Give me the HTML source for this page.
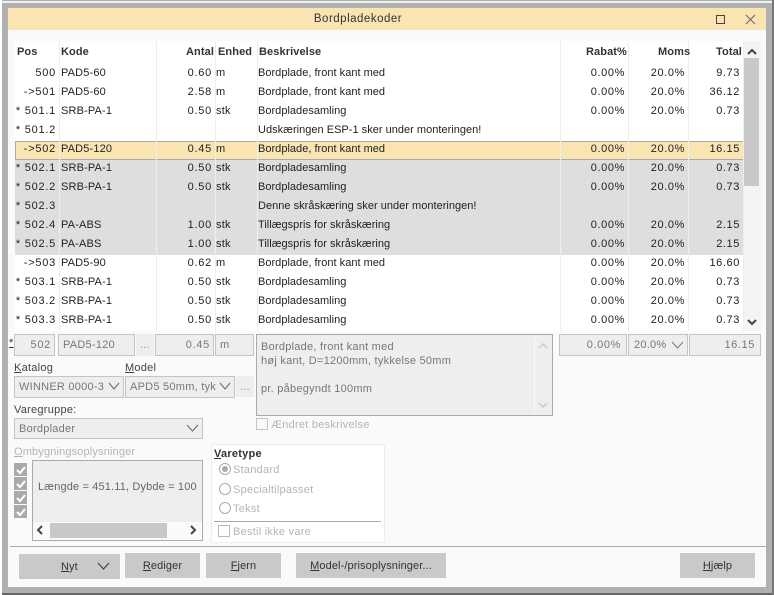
<!DOCTYPE html>
<html><head><meta charset="utf-8"><style>
html,body{margin:0;padding:0;width:774px;height:595px;overflow:hidden;background:#b0b0b0;}
*{box-sizing:border-box}
body{position:relative;font:11px/14px "Liberation Sans",sans-serif;letter-spacing:.25px;color:#222}
div,span.a{position:absolute;white-space:nowrap}
u{text-underline-offset:1px}
.row{left:15px;width:728px;height:19px}
.row div{top:3px;line-height:14px}
.p{left:0;width:41px;text-align:right;letter-spacing:.75px}
.k{left:46px;letter-spacing:.15px}
.q{left:142px;width:55px;text-align:right;letter-spacing:.75px}
.e{left:201px}.d{left:243px;letter-spacing:.02px}
.r{left:545px;width:65px;text-align:right;letter-spacing:.6px}
.m{left:613px;width:57px;text-align:right;letter-spacing:.6px}
.t{left:673px;width:52px;text-align:right;letter-spacing:.6px}
.sep{top:41px;width:1px;height:290px;background:#eee}
.grey{background:#dedede}
.hd{top:45px;font-weight:bold;color:#333;line-height:14px;letter-spacing:.1px}
.f{background:#eee;border:1px solid #c4c4c4;height:22px;color:#777;line-height:21px}
.btn{background:#c9c9c9;height:25px;text-align:center;line-height:26px;color:#333;letter-spacing:.1px}
.dis{color:#b4b4b4}
.cb{width:13px;height:13px;background:#aaa}
</style></head><body>
<div style="left:0;top:1px;width:774px;height:2px;background:#f0f0f0"></div>
<div style="left:0;top:593px;width:774px;height:2px;background:#666"></div>
<div style="left:772px;top:0;width:2px;height:595px;background:#777"></div>
<div style="left:0;top:0;width:2px;height:595px;background:#fff"></div>
<div style="left:8px;top:8px;width:758px;height:579px;background:#fafafa"></div>
<div style="left:8px;top:8px;width:758px;height:22px;background:#f9e4b2"></div>
<div style="left:8px;top:8px;width:700px;text-align:center;line-height:23px;color:#333;font-size:11.5px;letter-spacing:.5px">Bordpladekoder</div>
<svg style="position:absolute;left:715px;top:13px" width="45" height="13" fill="none" stroke="#444"><rect x="1.500" y="2.500" width="8" height="8"/><path d="M31 2l9 9M40 2l-9 9" stroke="#666"/></svg>

<div style="left:15px;top:41px;width:729px;height:290px;background:#fff"></div>
<div class="grey" style="left:15px;top:160px;width:729px;height:95px"></div>
<div style="left:15px;top:141px;width:729px;height:19px;background:#f9e4b2;border:1px solid #aaa"></div>
<div class="sep" style="left:59px"></div><div class="sep" style="left:156px"></div><div class="sep" style="left:215px"></div><div class="sep" style="left:257px"></div><div class="sep" style="left:560px"></div><div class="sep" style="left:628px"></div><div class="sep" style="left:688px"></div><div class="sep" style="left:743px"></div>

<div class="hd" style="left:17px">Pos</div><div class="hd" style="left:61px">Kode</div><div class="hd" style="left:186px">Antal</div><div class="hd" style="left:218px">Enhed</div><div class="hd" style="left:259px">Beskrivelse</div><div class="hd" style="left:586px">Rabat%</div><div class="hd" style="left:658px">Moms</div><div class="hd" style="left:716px">Total</div>

<div class="row" style="top:63px"><div class="p">500</div><div class="k">PAD5-60</div><div class="q">0.60</div><div class="e">m</div><div class="d">Bordplade, front kant med</div><div class="r">0.00%</div><div class="m">20.0%</div><div class="t">9.73</div></div>
<div class="row" style="top:82px"><div class="p">-&gt;501</div><div class="k">PAD5-60</div><div class="q">2.58</div><div class="e">m</div><div class="d">Bordplade, front kant med</div><div class="r">0.00%</div><div class="m">20.0%</div><div class="t">36.12</div></div>
<div class="row" style="top:101px"><div class="p">* 501.1</div><div class="k">SRB-PA-1</div><div class="q">0.50</div><div class="e">stk</div><div class="d">Bordpladesamling</div><div class="r">0.00%</div><div class="m">20.0%</div><div class="t">0.73</div></div>
<div class="row" style="top:120px"><div class="p">* 501.2</div><div class="d">Udskæringen ESP-1 sker under monteringen!</div></div>
<div class="row" style="top:139px"><div class="p">-&gt;502</div><div class="k">PAD5-120</div><div class="q">0.45</div><div class="e">m</div><div class="d">Bordplade, front kant med</div><div class="r">0.00%</div><div class="m">20.0%</div><div class="t">16.15</div></div>
<div class="row" style="top:158px"><div class="p">* 502.1</div><div class="k">SRB-PA-1</div><div class="q">0.50</div><div class="e">stk</div><div class="d">Bordpladesamling</div><div class="r">0.00%</div><div class="m">20.0%</div><div class="t">0.73</div></div>
<div class="row" style="top:177px"><div class="p">* 502.2</div><div class="k">SRB-PA-1</div><div class="q">0.50</div><div class="e">stk</div><div class="d">Bordpladesamling</div><div class="r">0.00%</div><div class="m">20.0%</div><div class="t">0.73</div></div>
<div class="row" style="top:196px"><div class="p">* 502.3</div><div class="d">Denne skråskæring sker under monteringen!</div></div>
<div class="row" style="top:215px"><div class="p">* 502.4</div><div class="k">PA-ABS</div><div class="q">1.00</div><div class="e">stk</div><div class="d">Tillægspris for skråskæring</div><div class="r">0.00%</div><div class="m">20.0%</div><div class="t">2.15</div></div>
<div class="row" style="top:234px"><div class="p">* 502.5</div><div class="k">PA-ABS</div><div class="q">1.00</div><div class="e">stk</div><div class="d">Tillægspris for skråskæring</div><div class="r">0.00%</div><div class="m">20.0%</div><div class="t">2.15</div></div>
<div class="row" style="top:253px"><div class="p">-&gt;503</div><div class="k">PAD5-90</div><div class="q">0.62</div><div class="e">m</div><div class="d">Bordplade, front kant med</div><div class="r">0.00%</div><div class="m">20.0%</div><div class="t">16.60</div></div>
<div class="row" style="top:272px"><div class="p">* 503.1</div><div class="k">SRB-PA-1</div><div class="q">0.50</div><div class="e">stk</div><div class="d">Bordpladesamling</div><div class="r">0.00%</div><div class="m">20.0%</div><div class="t">0.73</div></div>
<div class="row" style="top:291px"><div class="p">* 503.2</div><div class="k">SRB-PA-1</div><div class="q">0.50</div><div class="e">stk</div><div class="d">Bordpladesamling</div><div class="r">0.00%</div><div class="m">20.0%</div><div class="t">0.73</div></div>
<div class="row" style="top:310px"><div class="p">* 503.3</div><div class="k">SRB-PA-1</div><div class="q">0.50</div><div class="e">stk</div><div class="d">Bordpladesamling</div><div class="r">0.00%</div><div class="m">20.0%</div><div class="t">0.73</div></div>

<div style="left:744px;top:41px;width:17px;height:290px;background:#f4f4f4"></div>
<div style="left:744px;top:58px;width:15px;height:128px;background:#c8c8c8"></div>
<svg style="position:absolute;left:744px;top:45px" width="16" height="285" fill="none" stroke="#444" stroke-width="2"><path d="M4 9l4-4 4 4M4 275l4 4 4-4"/></svg>

<div style="left:9px;top:336px;color:#333"><u>*</u></div>
<div class="f" style="left:14px;top:334px;width:41px;text-align:right;padding-right:3px;letter-spacing:.7px">502</div>
<div class="f" style="left:58px;top:334px;width:77px;padding-left:4px">PAD5-120</div>
<div style="left:136px;top:334px;width:18px;height:22px;background:#eee;color:#999;text-align:center;line-height:22px">...</div>
<div class="f" style="left:155px;top:334px;width:59px;text-align:right;padding-right:3px;letter-spacing:.7px">0.45</div>
<div class="f" style="left:215px;top:334px;width:39px;padding-left:4px">m</div>

<div style="left:14px;top:361px;color:#444"><u>K</u>atalog</div>
<div style="left:125px;top:361px;color:#444"><u>M</u>odel</div>
<div class="f" style="left:14px;top:376px;width:110px;padding-left:4px">WINNER 0000-3</div>
<div class="f" style="left:125px;top:376px;width:110px;padding-left:4px;overflow:hidden">APD5 50mm, tyk</div>
<svg style="position:absolute;left:108px;top:382px" width="125" height="10" fill="none" stroke="#666"><path d="M1 1l5 6 5-6M112 1l5 6 5-6"/></svg>
<div style="left:236px;top:376px;width:18px;height:21px;background:#eee;color:#999;text-align:center;line-height:22px">...</div>
<div style="left:14px;top:403px;color:#444">Vare<u>g</u>ruppe:</div>
<div class="f" style="left:14px;top:418px;width:189px;padding-left:4px;height:21px;line-height:20px">Bordplader</div>
<svg style="position:absolute;left:186px;top:424px" width="14" height="10" fill="none" stroke="#666"><path d="M1 1l5.500 6 5.500-6"/></svg>

<div style="left:256px;top:334px;width:297px;height:82px;background:#eee;border:1px solid #aaa;color:#777;padding:5px 0 0 4px"><span style="position:static;white-space:pre">Bordplade, front kant med
høj kant, D=1200mm, tykkelse 50mm

pr. påbegyndt 100mm</span></div>
<div style="left:534px;top:337px;width:1px;height:76px;background:#fafafa"></div>
<svg style="position:absolute;left:537px;top:340px" width="12" height="70" fill="none" stroke="#ccc" stroke-width="1.500"><path d="M2 8l4-4 4 4M2 63l4 4 4-4"/></svg>
<div style="left:256px;top:418px;width:12px;height:12px;border:1px solid #c8c0c8"></div>
<div class="dis" style="left:271px;top:418px">Ændret beskrivelse</div>

<div class="f" style="left:559px;top:334px;width:68px;text-align:right;padding-right:5px;letter-spacing:.6px">0.00%</div>
<div class="f" style="left:628px;top:334px;width:60px;padding-left:5px">20.0%</div>
<svg style="position:absolute;left:671px;top:341px" width="14" height="9" fill="none" stroke="#777"><path d="M1 1l5.500 6 5.500-6"/></svg>
<div class="f" style="left:689px;top:334px;width:72px;text-align:right;padding-right:5px;letter-spacing:.6px">16.15</div>

<div class="dis" style="left:14px;top:445px;letter-spacing:.15px"><u>O</u>mbygningsoplysninger</div>
<div class="cb" style="left:14px;top:463px"></div><div class="cb" style="left:14px;top:477px"></div><div class="cb" style="left:14px;top:491px"></div><div class="cb" style="left:14px;top:505px"></div>
<svg style="position:absolute;left:14px;top:463px" width="13" height="56" fill="none" stroke="#fff" stroke-width="2"><path d="M3 7l3 3 5-6M3 21l3 3 5-6M3 35l3 3 5-6M3 49l3 3 5-6"/></svg>
<div style="left:32px;top:460px;width:171px;height:81px;background:#eee;border:1px solid #aaa"></div>
<div style="left:38px;top:480px;color:#666;letter-spacing:.15px">Længde = 451.11, Dybde = 100</div>
<div style="left:33px;top:522px;width:169px;height:18px;background:#fafafa"></div>
<div style="left:50px;top:523px;width:117px;height:15px;background:#c8c8c8"></div>
<svg style="position:absolute;left:36px;top:524px" width="164" height="12" fill="none" stroke="#444" stroke-width="2"><path d="M6 2l-4 4 4 4M155 2l4 4-4 4"/></svg>

<div style="left:211px;top:444px;width:174px;height:99px;background:#fff;border:1px solid #eee"></div>
<div style="left:214px;top:447px;font-weight:bold;color:#333"><u>V</u>aretype</div>
<svg style="position:absolute;left:218px;top:462px" width="14" height="54" fill="none" stroke="#aaa"><circle cx="7" cy="7" r="5.500"/><circle cx="7" cy="7" r="3" fill="#aaa" stroke="none"/><circle cx="7" cy="27" r="5.500"/><circle cx="7" cy="46" r="5.500"/></svg>
<div class="dis" style="left:233px;top:463px">Standard</div>
<div class="dis" style="left:233px;top:483px">Specialtilpasset</div>
<div class="dis" style="left:233px;top:502px">Tekst</div>
<div style="left:214px;top:521px;width:167px;height:1px;background:#aaa"></div>
<div style="left:218px;top:525px;width:12px;height:12px;border:1px solid #c0b8c0"></div>
<div class="dis" style="left:233px;top:525px">Bestil ikke vare</div>

<div style="left:10px;top:546px;width:756px;height:1px;background:#aaa"></div>
<div class="btn" style="left:19px;top:554px;width:101px"><span style="position:absolute;left:42px;top:0"><u>N</u>yt</span></div>
<svg style="position:absolute;left:97px;top:562px" width="14" height="9" fill="none" stroke="#333"><path d="M1 1l5.500 6 5.500-6"/></svg>
<div class="btn" style="left:125px;top:553px;width:75px"><u>R</u>ediger</div>
<div class="btn" style="left:206px;top:553px;width:75px"><u>F</u>jern</div>
<div class="btn" style="left:296px;top:553px;width:150px"><u>M</u>odel-/prisoplysninger...</div>
<div class="btn" style="left:680px;top:553px;width:75px"><u>H</u>jælp</div>
</body></html>
